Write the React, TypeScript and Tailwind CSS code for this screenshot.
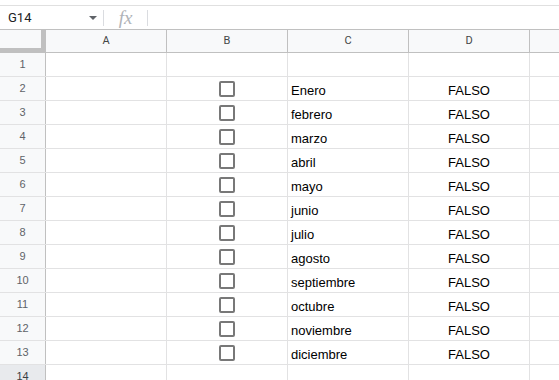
import React from "react";

const months = [
  "Enero",
  "febrero",
  "marzo",
  "abril",
  "mayo",
  "junio",
  "julio",
  "agosto",
  "septiembre",
  "octubre",
  "noviembre",
  "diciembre",
];

const cols = ["A", "B", "C", "D"];

const Checkbox = () => (
  <div className="h-4 w-4 rounded-[2px] border-2 border-[#787878] bg-white" />
);

const RowHeader = ({ n, active }: { n: number; active?: boolean }) => (
  <div
    className={`flex w-[46px] shrink-0 items-center justify-center border-r border-[#c0c0c0] text-[11px] ${
      active ? "bg-[#e8eaed] text-[#3c4043]" : "bg-[#f8f9fa] text-[#5f6368]"
    }`}
  >
    {n}
  </div>
);

const Cell = ({
  children,
  className = "",
}: {
  children?: React.ReactNode;
  className?: string;
}) => (
  <div
    className={`flex w-[121px] shrink-0 border-r border-[#e2e2e3] ${className}`}
  >
    {children}
  </div>
);

export default function App() {
  const rows = Array.from({ length: 14 }, (_, i) => i + 1);

  return (
    <div
      className="h-[380px] w-[559px] overflow-hidden bg-white"
      style={{ fontFamily: "Roboto, Arial, sans-serif" }}
    >
      {/* formula bar */}
      <div className="mt-[5px] flex h-6 items-center border-t border-[#e0e0e0]">
        <div className="flex w-[103px] items-center justify-between pl-2 pr-[6px] text-[13px] text-[#202124]">
          <span>G14</span>
          <svg width="8" height="4" viewBox="0 0 8 4">
            <path d="M0 0h8L4 4z" fill="#5f6368" />
          </svg>
        </div>
        <div className="h-4 w-px bg-[#dadce0]" />
        <div
          className="flex w-[43px] justify-center text-[19px] italic leading-none text-[#b0b3b8]"
          style={{ fontFamily: '"Liberation Serif", serif' }}
        >
          fx
        </div>
        <div className="h-4 w-px bg-[#dadce0]" />
      </div>

      {/* column headers */}
      <div className="flex h-6 border-y border-[#c0c0c0] bg-[#f8f9fa]">
        <div className="relative w-[46px] shrink-0 border-r border-[#c0c0c0]">
          <div className="absolute right-0 top-0 h-full w-1 bg-[#c0c0c0]" />
          <div className="absolute bottom-0 left-0 h-1 w-full bg-[#c0c0c0]" />
        </div>
        {cols.map((c) => (
          <div
            key={c}
            className="flex w-[121px] shrink-0 items-center justify-center border-r border-[#c0c0c0] text-[11px] text-[#444746]"
          >
            {c}
          </div>
        ))}
        <div className="flex-1" />
      </div>

      {/* grid */}
      {rows.map((n) => {
        const month = n >= 2 && n <= 13 ? months[n - 2] : null;
        return (
          <div
            key={n}
            className="flex h-6 border-b border-[#e2e2e3]"
            style={{ fontFamily: '"Liberation Sans", Arial, sans-serif' }}
          >
            <RowHeader n={n} active={n === 14} />
            <Cell />
            <Cell className="items-center justify-center">
              {month && <Checkbox />}
            </Cell>
            <Cell className="items-end pl-[3px] text-[13px] text-black">
              {month}
            </Cell>
            <Cell className="items-end justify-center text-[13px] text-black">
              {month && "FALSO"}
            </Cell>
            <div className="flex-1" />
          </div>
        );
      })}
    </div>
  );
}
